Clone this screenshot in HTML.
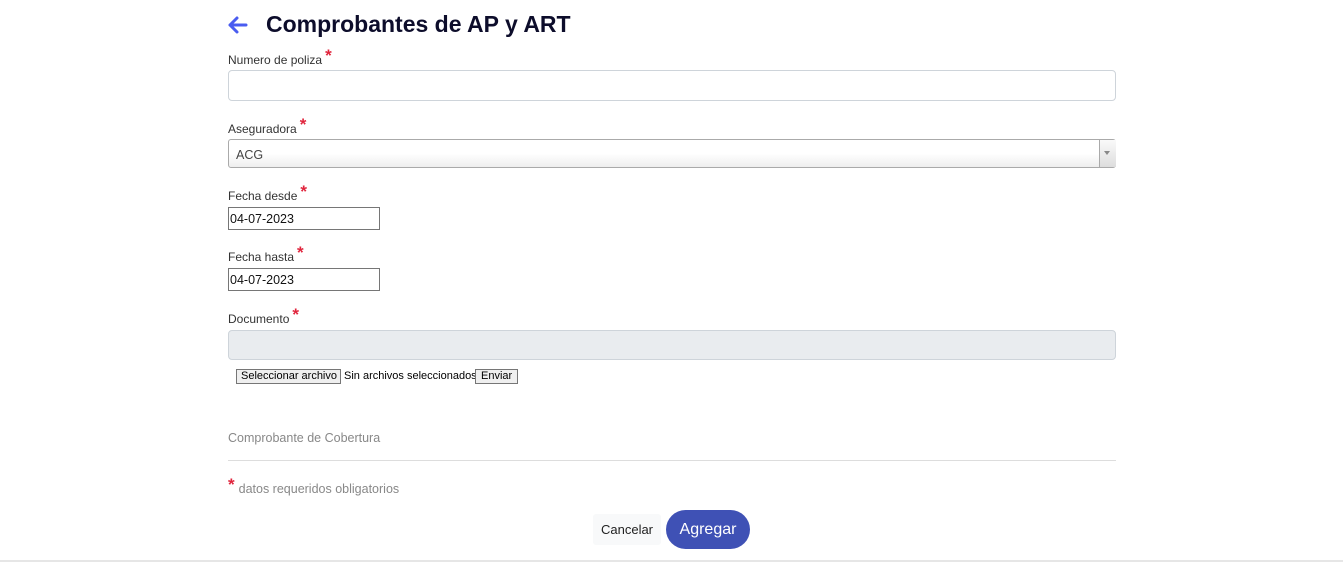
<!DOCTYPE html>
<html><head><style>
body{margin:0;width:1343px;height:562px;background:#fff;font-family:"Liberation Sans",sans-serif;position:relative;overflow:hidden;color:#333}
.a{position:absolute}
.lbl{font-size:12px;color:#333}
.st{color:#e0243c;font-size:17px;font-weight:bold;position:relative;top:-3px;margin-left:3px}
.date{position:absolute;left:228px;width:152px;height:23px;border:1px solid #767676;font-size:12.5px;box-sizing:border-box;padding:4px 1px;color:#111}
.btn{position:absolute;top:369px;height:15px;border:1px solid #767676;background:#efefef;font-size:11px;line-height:13px;padding:0 5px;color:#000;box-sizing:border-box;white-space:nowrap}
</style></head><body>
<svg class="a" style="left:227px;top:15px" width="22" height="20" viewBox="0 0 22 20"><path d="M19 10H3M10 3L3 10L10 17" stroke="#4a5cf0" stroke-width="3" fill="none" stroke-linecap="round" stroke-linejoin="round"/></svg>
<div class="a" style="left:266px;top:11px;font-size:23px;font-weight:bold;color:#0d0d2b">Comprobantes de AP y ART</div>
<div class="a lbl" style="left:228px;top:49px">Numero de poliza<span class="st">*</span></div>
<div class="a" style="left:228px;top:70px;width:886px;height:29px;border:1px solid #ced4da;border-radius:4px"></div>
<div class="a lbl" style="left:228px;top:118px">Aseguradora<span class="st">*</span></div>
<div class="a" style="left:228px;top:139px;width:886px;height:27px;border:1px solid #aaa;border-radius:3px;background:linear-gradient(#fff 50%,#eee);"></div>
<div class="a" style="left:1099px;top:140px;width:16px;height:27px;border-left:1px solid #aaa;background:linear-gradient(#fafafa,#ddd)"></div>
<div class="a" style="left:1104px;top:151px;border-left:3px solid transparent;border-right:3px solid transparent;border-top:4px solid #888"></div>
<div class="a" style="left:236px;top:148px;font-size:12.5px;color:#444">ACG</div>
<div class="a lbl" style="left:228px;top:185px">Fecha desde<span class="st">*</span></div>
<div class="date" style="top:207px">04-07-2023</div>
<div class="a lbl" style="left:228px;top:246px">Fecha hasta<span class="st">*</span></div>
<div class="date" style="top:268px">04-07-2023</div>
<div class="a lbl" style="left:228px;top:308px">Documento<span class="st">*</span></div>
<div class="a" style="left:228px;top:330px;width:886px;height:28px;border:1px solid #ced4da;border-radius:4px;background:#e9ecef"></div>
<div class="btn" style="left:236px;width:105px;padding:0 4px">Seleccionar archivo</div>
<div class="a" style="left:344px;top:370px;font-size:11px;color:#000;white-space:nowrap">Sin archivos seleccionados</div>
<div class="btn" style="left:475px;width:43px">Enviar</div>
<div class="a" style="left:228px;top:431px;font-size:12.5px;color:#888">Comprobante de Cobertura</div>
<div class="a" style="left:228px;top:460px;width:888px;height:1px;background:#ddd"></div>
<div class="a" style="left:228px;top:478px;font-size:12.5px;color:#888"><span class="st" style="margin:0 4px 0 0">*</span>datos requeridos obligatorios</div>
<div class="a" style="left:593px;top:514px;width:68px;height:31px;background:#f8f9fa;border-radius:3px;font-size:13px;color:#222;text-align:center;line-height:32px">Cancelar</div>
<div class="a" style="left:666px;top:510px;width:84px;height:39px;background:#3f51b5;border-radius:20px;font-size:16px;color:#fff;text-align:center;line-height:40px">Agregar</div>
<div class="a" style="left:0;top:560px;width:1343px;height:2px;background:#e6e6e6"></div>
</body></html>
